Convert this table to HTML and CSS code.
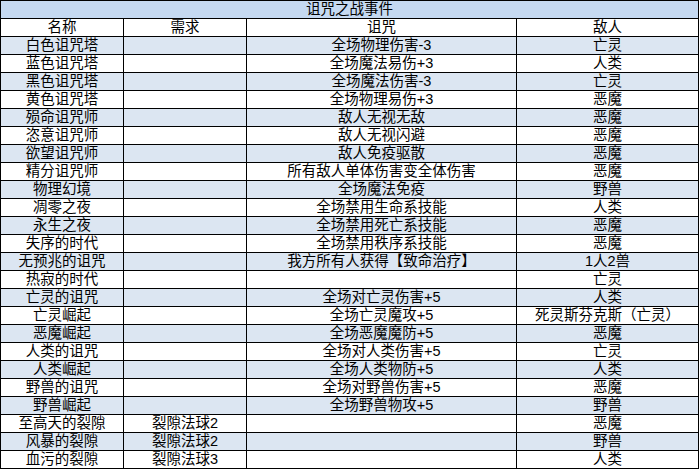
FILE: index.html
```html
<!DOCTYPE html>
<html lang="zh-CN">
<head>
<meta charset="utf-8">
<title>诅咒之战事件</title>
<link rel="stylesheet" href="styles.css">
</head>
<body>
<div class="sheet">
  <div class="title">诅咒之战事件</div>
  <div class="row head"><div>名称</div><div>需求</div><div>诅咒</div><div>敌人</div></div>
  <div class="data">
    <div class="row"><div>白色诅咒塔</div><div></div><div>全场物理伤害-3</div><div>亡灵</div></div>
    <div class="row"><div>蓝色诅咒塔</div><div></div><div>全场魔法易伤+3</div><div>人类</div></div>
    <div class="row"><div>黑色诅咒塔</div><div></div><div>全场魔法伤害-3</div><div>亡灵</div></div>
    <div class="row"><div>黄色诅咒塔</div><div></div><div>全场物理易伤+3</div><div>恶魔</div></div>
    <div class="row"><div>殒命诅咒师</div><div></div><div>敌人无视无敌</div><div>恶魔</div></div>
    <div class="row"><div>恣意诅咒师</div><div></div><div>敌人无视闪避</div><div>恶魔</div></div>
    <div class="row"><div>欲望诅咒师</div><div></div><div>敌人免疫驱散</div><div>恶魔</div></div>
    <div class="row"><div>精分诅咒师</div><div></div><div>所有敌人单体伤害变全体伤害</div><div>恶魔</div></div>
    <div class="row"><div>物理幻境</div><div></div><div>全场魔法免疫</div><div>野兽</div></div>
    <div class="row"><div>凋零之夜</div><div></div><div>全场禁用生命系技能</div><div>人类</div></div>
    <div class="row"><div>永生之夜</div><div></div><div>全场禁用死亡系技能</div><div>恶魔</div></div>
    <div class="row"><div>失序的时代</div><div></div><div>全场禁用秩序系技能</div><div>恶魔</div></div>
    <div class="row"><div>无预兆的诅咒</div><div></div><div>我方所有人获得【致命治疗】</div><div>1人2兽</div></div>
    <div class="row"><div>热寂的时代</div><div></div><div></div><div>亡灵</div></div>
    <div class="row"><div>亡灵的诅咒</div><div></div><div>全场对亡灵伤害+5</div><div>人类</div></div>
    <div class="row"><div>亡灵崛起</div><div></div><div>全场亡灵魔攻+5</div><div>死灵斯芬克斯（亡灵）</div></div>
    <div class="row"><div>恶魔崛起</div><div></div><div>全场恶魔魔防+5</div><div>恶魔</div></div>
    <div class="row"><div>人类的诅咒</div><div></div><div>全场对人类伤害+5</div><div>亡灵</div></div>
    <div class="row"><div>人类崛起</div><div></div><div>全场人类物防+5</div><div>人类</div></div>
    <div class="row"><div>野兽的诅咒</div><div></div><div>全场对野兽伤害+5</div><div>恶魔</div></div>
    <div class="row"><div>野兽崛起</div><div></div><div>全场野兽物攻+5</div><div>野兽</div></div>
    <div class="row"><div>至高天的裂隙</div><div>裂隙法球2</div><div></div><div>恶魔</div></div>
    <div class="row"><div>风暴的裂隙</div><div>裂隙法球2</div><div></div><div>野兽</div></div>
    <div class="row"><div>血污的裂隙</div><div>裂隙法球3</div><div></div><div>人类</div></div>
  </div>
</div>
</body>
</html>
```

FILE: styles.css
```css
html, body {
  margin: 0;
  padding: 0;
  background: #ffffff;
}

.sheet {
  width: 699px;
  box-sizing: border-box;
  border-top: 1px solid #000;
  border-left: 1px solid #000;
  font-family: "Liberation Sans", "Noto Sans CJK SC", sans-serif;
  font-size: 14.5px;
  color: #000;
}

.title {
  height: 18px;
  box-sizing: border-box;
  border-right: 1px solid #000;
  border-bottom: 1px solid #000;
  background: #c5d9f1;
  text-align: center;
  line-height: 17px;
}

.row {
  display: grid;
  grid-template-columns: 123px 123px 270px 182px;
}

.row > div {
  height: 18px;
  box-sizing: border-box;
  border-right: 1px solid #000;
  border-bottom: 1px solid #000;
  text-align: center;
  line-height: 17px;
  white-space: nowrap;
  overflow: hidden;
}

.data .row:nth-child(odd) > div {
  background: #dce6f2;
}
```
